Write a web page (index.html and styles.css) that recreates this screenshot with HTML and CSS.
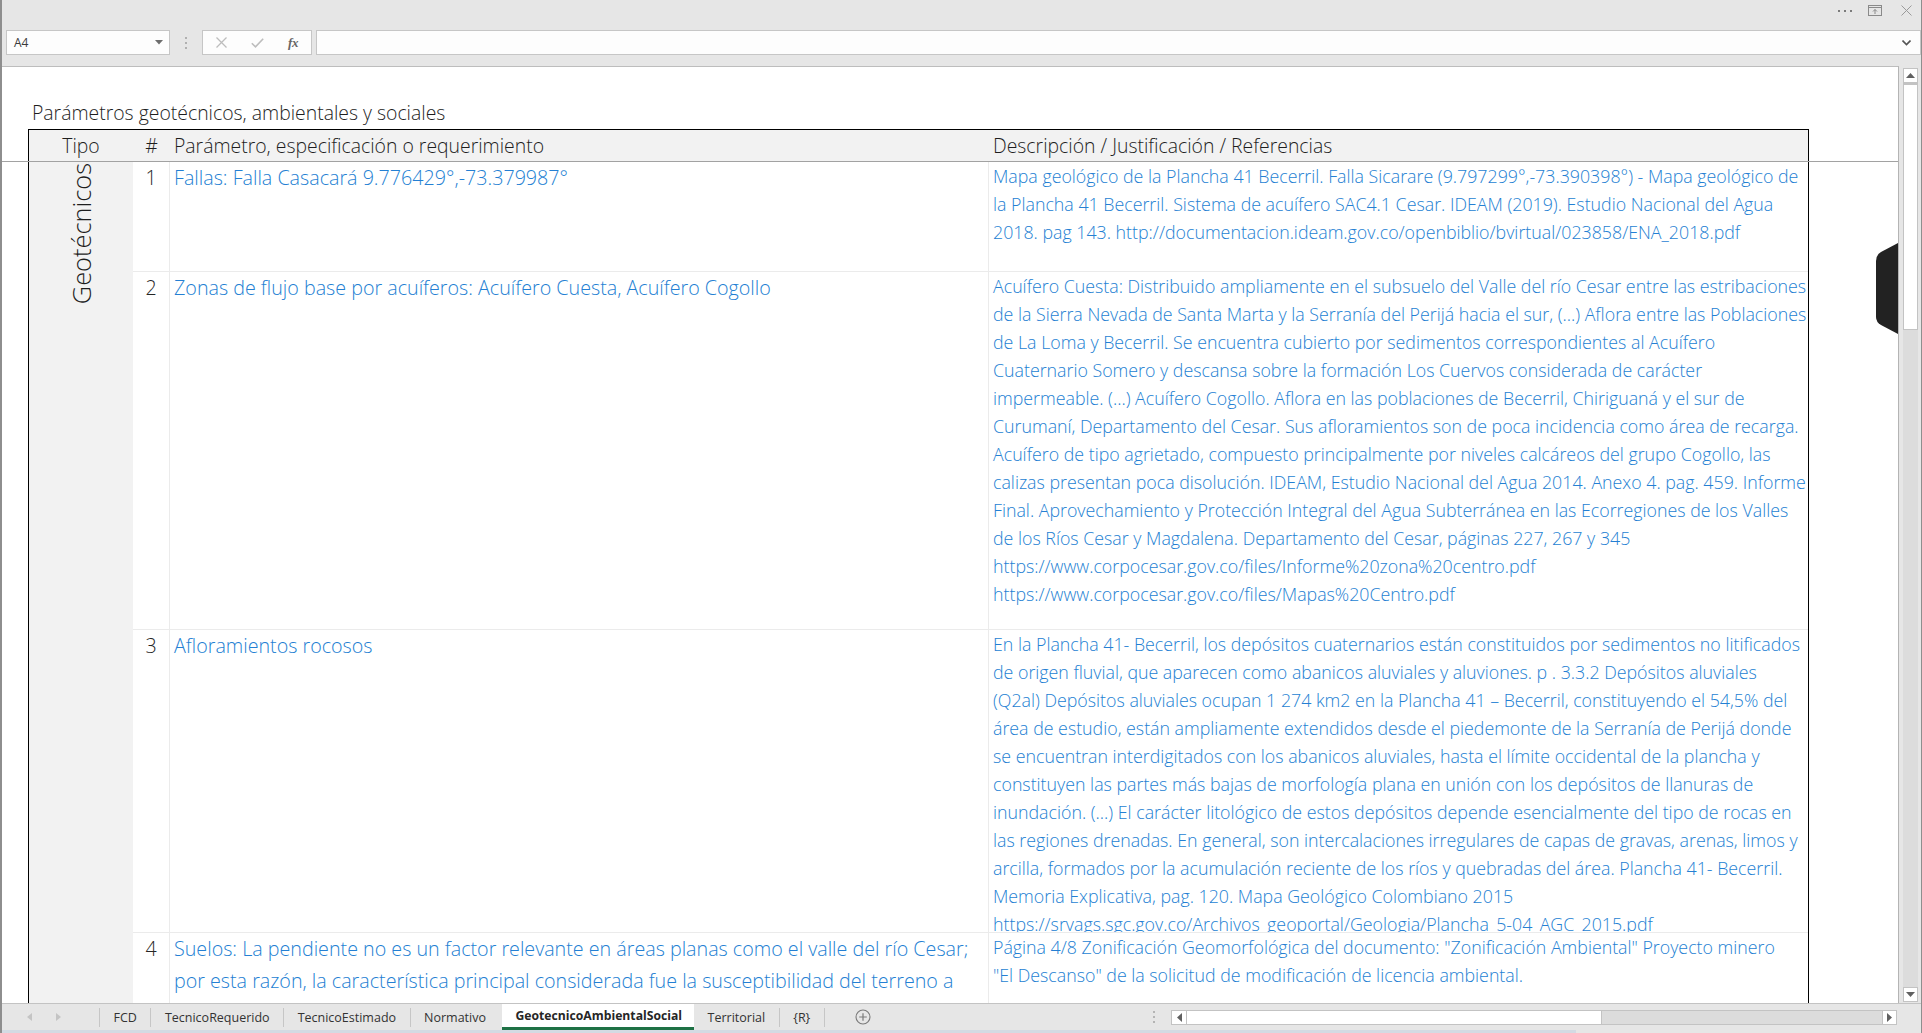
FILE: index.html
```html
<!DOCTYPE html>
<html lang="es">
<head>
<meta charset="utf-8">
<title>GeotecnicoAmbientalSocial</title>
<link rel="stylesheet" href="styles.css">
</head>
<body>
<div class="window">
  <div class="topbar">
    <div class="caption">
      <span class="cap-dots"><i></i><i></i><i></i></span>
      <svg class="cap-restore" width="14" height="11" viewBox="0 0 14 11"><rect x="0.5" y="0.5" width="13" height="10" fill="none" stroke="#8a8a8a"/><line x1="0.5" y1="2.5" x2="13.5" y2="2.5" stroke="#8a8a8a"/><path d="M7 9V4.5M5 6.5L7 4.5L9 6.5" fill="none" stroke="#8a8a8a"/></svg>
      <svg class="cap-close" width="11" height="11" viewBox="0 0 11 11"><path d="M0.5 0.5L10.5 10.5M10.5 0.5L0.5 10.5" stroke="#9a9a9a" stroke-width="1"/></svg>
    </div>
    <div class="formula-row">
      <div class="namebox">
        <span class="namebox-text">A4</span>
        <svg width="8" height="5" viewBox="0 0 8 5"><path d="M0 0H8L4 4.5Z" fill="#6d6d6d"/></svg>
      </div>
      <div class="fr-dots"><i></i><i></i><i></i></div>
      <div class="fxbox">
        <span class="fx-slot"><svg width="11" height="11" viewBox="0 0 11 11"><path d="M0.5 0.5L10.5 10.5M10.5 0.5L0.5 10.5" stroke="#bdbdbd" stroke-width="1.3"/></svg></span>
        <span class="fx-slot"><svg width="13" height="10" viewBox="0 0 13 10"><path d="M0.8 5.2L4.5 8.8L12.2 0.8" fill="none" stroke="#bdbdbd" stroke-width="1.6"/></svg></span>
        <span class="fx-slot fx-text">fx</span>
      </div>
      <div class="formula-input">
        <svg width="9" height="6" viewBox="0 0 9 6"><path d="M0.5 0.5L4.5 4.5L8.5 0.5" fill="none" stroke="#555" stroke-width="1.6"/></svg>
      </div>
    </div>
  </div>

  <div class="workarea">
    <div class="sheet">
      <div class="sheet-title">Parámetros geotécnicos, ambientales y sociales</div>
      <div class="head-band">
        <div class="thead">
          <div class="th th-tipo">Tipo</div>
          <div class="th th-num">#</div>
          <div class="th th-text">Parámetro, especificación o requerimiento</div>
          <div class="th th-text">Descripción / Justificación / Referencias</div>
        </div>
      </div>
      <div class="tbody">
        <div class="tipo"><span class="tipo-label">Geotécnicos</span></div>

        <div class="cell num">1</div>
        <div class="cell param">Fallas: Falla Casacará 9.776429°,-73.379987°</div>
        <div class="cell desc">Mapa geológico de la Plancha 41 Becerril. Falla Sicarare (9.797299°,-73.390398°) - Mapa geológico de<br>la Plancha 41 Becerril. Sistema de acuífero SAC4.1 Cesar. IDEAM (2019). Estudio Nacional del Agua<br>2018. pag 143. http://documentacion.ideam.gov.co/openbiblio/bvirtual/023858/ENA_2018.pdf</div>

        <div class="cell num">2</div>
        <div class="cell param">Zonas de flujo base por acuíferos: Acuífero Cuesta, Acuífero Cogollo</div>
        <div class="cell desc">Acuífero Cuesta: Distribuido ampliamente en el subsuelo del Valle del río Cesar entre las estribaciones<br>de la Sierra Nevada de Santa Marta y la Serranía del Perijá hacia el sur, (...) Aflora entre las Poblaciones<br>de La Loma y Becerril. Se encuentra cubierto por sedimentos correspondientes al Acuífero<br>Cuaternario Somero y descansa sobre la formación Los Cuervos considerada de carácter<br>impermeable. (...) Acuífero Cogollo. Aflora en las poblaciones de Becerril, Chiriguaná y el sur de<br>Curumaní, Departamento del Cesar. Sus afloramientos son de poca incidencia como área de recarga.<br>Acuífero de tipo agrietado, compuesto principalmente por niveles calcáreos del grupo Cogollo, las<br>calizas presentan poca disolución. IDEAM, Estudio Nacional del Agua 2014. Anexo 4. pag. 459. Informe<br>Final. Aprovechamiento y Protección Integral del Agua Subterránea en las Ecorregiones de los Valles<br>de los Ríos Cesar y Magdalena. Departamento del Cesar, páginas 227, 267 y 345<br>https://www.corpocesar.gov.co/files/Informe%20zona%20centro.pdf<br>https://www.corpocesar.gov.co/files/Mapas%20Centro.pdf</div>

        <div class="cell num">3</div>
        <div class="cell param">Afloramientos rocosos</div>
        <div class="cell desc">En la Plancha 41- Becerril, los depósitos cuaternarios están constituidos por sedimentos no litificados<br>de origen fluvial, que aparecen como abanicos aluviales y aluviones. p . 3.3.2 Depósitos aluviales<br>(Q2al) Depósitos aluviales ocupan 1 274 km2 en la Plancha 41 – Becerril, constituyendo el 54,5% del<br>área de estudio, están ampliamente extendidos desde el piedemonte de la Serranía de Perijá donde<br>se encuentran interdigitados con los abanicos aluviales, hasta el límite occidental de la plancha y<br>constituyen las partes más bajas de morfología plana en unión con los depósitos de llanuras de<br>inundación. (...) El carácter litológico de estos depósitos depende esencialmente del tipo de rocas en<br>las regiones drenadas. En general, son intercalaciones irregulares de capas de gravas, arenas, limos y<br>arcilla, formados por la acumulación reciente de los ríos y quebradas del área. Plancha 41- Becerril.<br>Memoria Explicativa, pag. 120. Mapa Geológico Colombiano 2015<br>https://srvags.sgc.gov.co/Archivos_geoportal/Geologia/Plancha_5-04_AGC_2015.pdf</div>

        <div class="cell num">4</div>
        <div class="cell param">Suelos: La pendiente no es un factor relevante en áreas planas como el valle del río Cesar;<br>por esta razón, la característica principal considerada fue la susceptibilidad del terreno a</div>
        <div class="cell desc">Página 4/8 Zonificación Geomorfológica del documento: "Zonificación Ambiental" Proyecto minero<br>"El Descanso" de la solicitud de modificación de licencia ambiental.</div>
      </div>

      <svg class="side-handle" width="24" height="92" viewBox="0 0 24 92"><path d="M24 0L7 9Q2 12 2 18V74Q2 79 7 82L24 91Z" fill="#222"/></svg>
    </div>

    <div class="vscroll">
      <div class="vs-btn"><svg width="9" height="5" viewBox="0 0 9 5"><path d="M0 5H9L4.5 0Z" fill="#606060"/></svg></div>
      <div class="vs-thumb"></div>
      <div class="vs-track"></div>
      <div class="vs-btn"><svg width="9" height="5" viewBox="0 0 9 5"><path d="M0 0H9L4.5 5Z" fill="#606060"/></svg></div>
    </div>
  </div>

  <div class="tabbar">
    <div class="tab-nav">
      <svg width="5" height="8" viewBox="0 0 5 8"><path d="M5 0V8L0 4Z" fill="#c4c4c4"/></svg>
      <svg width="5" height="8" viewBox="0 0 5 8"><path d="M0 0V8L5 4Z" fill="#c4c4c4"/></svg>
    </div>
    <span class="tab-sep"></span>
    <div class="tab">FCD</div>
    <span class="tab-sep"></span>
    <div class="tab">TecnicoRequerido</div>
    <span class="tab-sep"></span>
    <div class="tab">TecnicoEstimado</div>
    <span class="tab-sep"></span>
    <div class="tab">Normativo</div>
    <div class="tab tab-active">GeotecnicoAmbientalSocial</div>
    <div class="tab">Territorial</div>
    <span class="tab-sep"></span>
    <div class="tab">{R}</div>
    <span class="tab-sep"></span>
    <div class="tab-add"><svg width="16" height="16" viewBox="0 0 16 16"><circle cx="8" cy="8" r="7" fill="none" stroke="#7a7a7a" stroke-width="1.1"/><path d="M8 4.2V11.8M4.2 8H11.8" stroke="#7a7a7a" stroke-width="1.2"/></svg></div>
    <div class="tab-spacer"></div>
    <div class="tb-dots"><i></i><i></i><i></i></div>
    <div class="hscroll">
      <div class="hs-btn"><svg width="5" height="9" viewBox="0 0 5 9"><path d="M5 0V9L0 4.5Z" fill="#606060"/></svg></div>
      <div class="hs-thumb"></div>
      <div class="hs-track"></div>
      <div class="hs-btn"><svg width="5" height="9" viewBox="0 0 5 9"><path d="M0 0V9L5 4.5Z" fill="#606060"/></svg></div>
    </div>
  </div>
  <div class="bottom-strip"></div>
</div>
</body>
</html>
```

FILE: styles.css
```css
* { box-sizing: border-box; margin: 0; padding: 0; }

html, body {
  width: 1922px;
  height: 1033px;
  overflow: hidden;
}

body {
  font-family: "Open Sans", "Noto Sans", "DejaVu Sans", sans-serif;
  background: #e6e6e6;
  color: #262626;
}

.window {
  width: 1922px;
  height: 1033px;
  display: flex;
  flex-direction: column;
  border-left: 2px solid #8e8e8e;
  border-right: 1px solid #8e8e8e;
  background: #e6e6e6;
}

/* ---------- top bar ---------- */
.topbar {
  height: 66px;
  flex: none;
  display: flex;
  flex-direction: column;
}

.caption {
  height: 30px;
  display: flex;
  justify-content: flex-end;
  align-items: flex-start;
  padding-top: 5px;
  padding-right: 9px;
}

.cap-dots {
  display: flex;
  gap: 4px;
  margin-top: 5px;
  margin-right: 16px;
}
.cap-dots i {
  display: block;
  width: 2px;
  height: 2px;
  background: #7b7b7b;
}
.cap-restore { margin-right: 19px; }

.formula-row {
  height: 25px;
  display: flex;
  align-items: stretch;
  padding-left: 4px;
}

.namebox {
  width: 164px;
  background: #fdfdfd;
  border: 1px solid #c6c6c6;
  display: flex;
  align-items: center;
  justify-content: space-between;
  padding: 0 6px 0 7px;
  font-size: 12px;
  color: #3a3a3a;
}

.fr-dots {
  width: 32px;
  display: flex;
  flex-direction: column;
  align-items: center;
  justify-content: center;
  gap: 3px;
}
.fr-dots i {
  display: block;
  width: 2px;
  height: 2px;
  background: #b0b0b0;
}

.fxbox {
  width: 110px;
  background: #fdfdfd;
  border: 1px solid #c6c6c6;
  display: flex;
}
.fx-slot {
  width: 36px;
  display: flex;
  align-items: center;
  justify-content: center;
}
.fx-text {
  font-family: "Liberation Serif", "DejaVu Serif", serif;
  font-style: italic;
  font-weight: bold;
  font-size: 13px;
  color: #666;
  letter-spacing: -0.5px;
}

.formula-input {
  flex: 1;
  margin-left: 4px;
  background: #fdfdfd;
  border: 1px solid #c6c6c6;
  display: flex;
  align-items: center;
  justify-content: flex-end;
  padding-right: 9px;
}

/* ---------- work area ---------- */
.workarea {
  height: 937px;
  flex: none;
  display: flex;
}

.sheet {
  position: relative;
  width: 1897px;
  flex: none;
  background: #fff;
  border-top: 1px solid #bdbdbd;
  border-right: 1px solid #b4b4b4;
  overflow: hidden;
}

.sheet-title {
  margin-top: 32px;
  margin-bottom: 2px;
  padding-left: 30px;
  height: 28px;
  line-height: 28px;
  font-size: 19.4px;
  font-weight: 300;
  color: #1e1e1e;
  white-space: nowrap;
}

.head-band {
  padding-left: 26px;
  border-bottom: 1px solid #a2a2a2;
}

.thead {
  width: 1781px;
  height: 32px;
  border: 1px solid #000;
  border-bottom: none;
  background: #f2f2f2;
  display: grid;
  grid-template-columns: 104px 37px 819px 819px;
  font-size: 19.4px;
  font-weight: 300;
  line-height: 31px;
  color: #1e1e1e;
  white-space: nowrap;
}
.th-tipo, .th-num { text-align: center; }
.th-text { padding-left: 4px; }

.tbody {
  margin-left: 26px;
  width: 1781px;
  border-left: 1px solid #000;
  border-right: 1px solid #000;
  display: grid;
  grid-template-columns: 104px 37px 819px 819px;
  grid-template-rows: 110px 358px 303px 200px;
}

.tipo {
  grid-column: 1;
  grid-row: 1 / -1;
  background: #f2f2f2;
  display: flex;
  justify-content: center;
  align-items: flex-start;
  padding-top: 1px;
}
.tipo-label {
  writing-mode: vertical-rl;
  transform: rotate(180deg);
  font-size: 25.4px;
  font-weight: 300;
  line-height: 30px;
  color: #1e1e1e;
  white-space: nowrap;
}

.cell {
  overflow: hidden;
  border-bottom: 1px solid #ebebeb;
  white-space: nowrap;
  font-weight: 300;
}

.num {
  border-right: 1px solid #ebebeb;
  text-align: center;
  font-size: 19.6px;
  line-height: 32px;
  color: #262626;
}

.param {
  border-right: 1px solid #ebebeb;
  padding-left: 4px;
  font-size: 19.7px;
  line-height: 32px;
  color: #247fd3;
}

.desc {
  padding-left: 4px;
  font-size: 17.8px;
  line-height: 28px;
  color: #247fd3;
}

.side-handle {
  position: absolute;
  right: 0;
  top: 176px;
}

/* ---------- vertical scrollbar ---------- */
.vscroll {
  width: 22px;
  flex: none;
  display: flex;
  flex-direction: column;
  padding: 2px 3px 1px 4px;
}
.vs-btn {
  height: 15px;
  flex: none;
  background: #fff;
  border: 1px solid #c3c3c3;
  display: flex;
  align-items: center;
  justify-content: center;
}
.vs-thumb {
  height: 247px;
  flex: none;
  background: #fff;
  border: 1px solid #c3c3c3;
  border-top-width: 2px;
}
.vs-track {
  flex: 1;
  background: #dcdcdc;
}

/* ---------- sheet tabs ---------- */
.tabbar {
  height: 27px;
  flex: none;
  display: flex;
  align-items: stretch;
  border-top: 1px solid #c3c3c3;
  font-size: 12.5px;
  color: #333;
  white-space: nowrap;
}

.tab-nav {
  width: 97px;
  display: flex;
  align-items: center;
  gap: 24px;
  padding-left: 25px;
}

.tab-sep {
  width: 1px;
  background: #c6c6c6;
  margin: 4px 0 3px;
}

.tab {
  display: flex;
  align-items: center;
  padding: 0 13.5px;
}

.tab-active {
  background: #fff;
  font-weight: bold;
  font-size: 12.2px;
  color: #262626;
  border-bottom: 3px solid #1e7145;
  padding: 0 12px 0 13px;
  margin-left: 3px;
}

.tab-add {
  display: flex;
  align-items: center;
  margin-left: 30px;
}

.tab-spacer { flex: 1; }

.tb-dots {
  display: flex;
  flex-direction: column;
  justify-content: center;
  gap: 3px;
  margin-right: 16px;
}
.tb-dots i {
  display: block;
  width: 2px;
  height: 2px;
  background: #b4b4b4;
}

.hscroll {
  width: 726px;
  height: 15px;
  align-self: center;
  margin-right: 24px;
  display: flex;
  border: 1px solid #c3c3c3;
  background: #dcdcdc;
}
.hs-btn {
  width: 14px;
  flex: none;
  background: #fff;
  display: flex;
  align-items: center;
  justify-content: center;
}
.hs-thumb {
  width: 416px;
  flex: none;
  background: #fff;
  border-left: 1px solid #c3c3c3;
  border-right: 1px solid #c3c3c3;
}
.hs-track { flex: 1; }
.hscroll .hs-btn:last-child { border-left: 1px solid #c3c3c3; }

.bottom-strip {
  height: 3px;
  flex: none;
  background: linear-gradient(to right, #d3dae3 0, #d3dae3 82%, #e6e6e6 82%);
}
```
